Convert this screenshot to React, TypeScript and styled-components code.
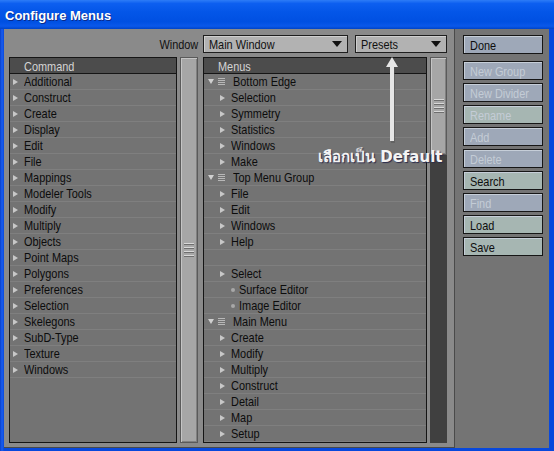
import React from "react";
import styled, { createGlobalStyle, css } from "styled-components";

const GlobalStyle = createGlobalStyle`
  html, body {
    margin: 0;
    padding: 0;
    background: #0846d8;
  }
  * {
    box-sizing: border-box;
  }
`;

// the dialog font is a tall, narrow sans: squeeze Liberation Sans to get it
const narrow = (origin = "left") => css`
  display: inline-block;
  font-family: "Liberation Sans", Arial, sans-serif;
  font-size: 13px;
  transform: scaleX(0.84);
  transform-origin: ${origin} center;
  white-space: nowrap;
`;

type Item = {
  label: string;
  kind: "group" | "sub" | "leaf" | "blank";
};

const commands = [
  "Additional",
  "Construct",
  "Create",
  "Display",
  "Edit",
  "File",
  "Mappings",
  "Modeler Tools",
  "Modify",
  "Multiply",
  "Objects",
  "Point Maps",
  "Polygons",
  "Preferences",
  "Selection",
  "Skelegons",
  "SubD-Type",
  "Texture",
  "Windows",
];

const menus: Item[] = [
  { label: "Bottom Edge", kind: "group" },
  { label: "Selection", kind: "sub" },
  { label: "Symmetry", kind: "sub" },
  { label: "Statistics", kind: "sub" },
  { label: "Windows", kind: "sub" },
  { label: "Make", kind: "sub" },
  { label: "Top Menu Group", kind: "group" },
  { label: "File", kind: "sub" },
  { label: "Edit", kind: "sub" },
  { label: "Windows", kind: "sub" },
  { label: "Help", kind: "sub" },
  { label: "", kind: "blank" },
  { label: "Select", kind: "sub" },
  { label: "Surface Editor", kind: "leaf" },
  { label: "Image Editor", kind: "leaf" },
  { label: "Main Menu", kind: "group" },
  { label: "Create", kind: "sub" },
  { label: "Modify", kind: "sub" },
  { label: "Multiply", kind: "sub" },
  { label: "Construct", kind: "sub" },
  { label: "Detail", kind: "sub" },
  { label: "Map", kind: "sub" },
  { label: "Setup", kind: "sub" },
];

const buttons: { label: string; tone: "blue" | "green"; disabled?: boolean }[] = [
  { label: "New Group", tone: "blue", disabled: true },
  { label: "New Divider", tone: "blue", disabled: true },
  { label: "Rename", tone: "green", disabled: true },
  { label: "Add", tone: "blue", disabled: true },
  { label: "Delete", tone: "blue", disabled: true },
  { label: "Search", tone: "green" },
  { label: "Find", tone: "blue", disabled: true },
  { label: "Load", tone: "green" },
  { label: "Save", tone: "green" },
];

export default function App() {
  return (
    <>
      <GlobalStyle />
      <Window>
        <TitleBar>Configure Menus</TitleBar>
        <Body>
          <MainArea>
            <TopBar>
              <FieldLabel>Window</FieldLabel>
              <Dropdown $width={145}>
                <DropText>Main Window</DropText>
                <DropArrow />
              </Dropdown>
              <Dropdown $width={92}>
                <DropText>Presets</DropText>
                <DropArrow />
              </Dropdown>
            </TopBar>

            <Lists>
              <ListBox $width={168}>
                <ListHeader>
                  <HeaderText>Command</HeaderText>
                </ListHeader>
                {commands.map((c) => (
                  <Row key={c}>
                    <RightTri />
                    <RowText $gap={6}>{c}</RowText>
                  </Row>
                ))}
              </ListBox>

              <ScrollFull>
                <Grip />
              </ScrollFull>

              <ListBox $width={224}>
                <ListHeader>
                  <HeaderText>Menus</HeaderText>
                </ListHeader>
                {menus.map((m, i) => (
                  <MenuRow key={i} item={m} />
                ))}
              </ListBox>

              <ScrollTrack>
                <ScrollThumb>
                  <Grip />
                </ScrollThumb>
              </ScrollTrack>

              <Annotation>
                <ArrowSvg width="14" height="86" viewBox="0 0 14 86">
                  <path d="M8 2 L14 12 L10 12 L10 86 L6 86 L6 12 L2 12 Z" fill="#555" opacity="0.55" />
                  <path d="M7 0 L13 10 L9 10 L9 84 L5 84 L5 10 L1 10 Z" fill="#e6e6e6" />
                </ArrowSvg>
                <Note>เลือกเป็น Default</Note>
              </Annotation>
            </Lists>
          </MainArea>

          <SidePanel>
            <SideButton $tone="blue" $gapAfter={4}>
              <ButtonText>Done</ButtonText>
            </SideButton>
            {buttons.map((b) => (
              <SideButton key={b.label} $tone={b.tone} $disabled={b.disabled}>
                <ButtonText>{b.label}</ButtonText>
              </SideButton>
            ))}
          </SidePanel>
        </Body>
      </Window>
    </>
  );
}

function MenuRow({ item }: { item: Item }) {
  if (item.kind === "blank") return <Row />;
  if (item.kind === "group") {
    return (
      <Row>
        <DownTri />
        <ListIcon>
          <span />
          <span />
          <span />
          <span />
        </ListIcon>
        <RowText $gap={8}>{item.label}</RowText>
      </Row>
    );
  }
  if (item.kind === "leaf") {
    return (
      <Row $indent={24}>
        <Dot />
        <RowText $gap={4}>{item.label}</RowText>
      </Row>
    );
  }
  return (
    <Row $indent={13}>
      <RightTri />
      <RowText $gap={6}>{item.label}</RowText>
    </Row>
  );
}

const Window = styled.div`
  width: 554px;
  height: 451px;
  display: flex;
  flex-direction: column;
  background: linear-gradient(90deg, #0a3fc8 0px, #1a5ef0 2px, #0848dc 4px);
  overflow: hidden;
`;

const TitleBar = styled.div`
  height: 29px;
  flex: none;
  padding: 8px 0 0 5px;
  font-family: "Liberation Sans", Arial, sans-serif;
  font-weight: bold;
  font-size: 13px;
  line-height: 16px;
  color: #ffffff;
  text-shadow: 1px 1px 0 #0a2a8a;
  background: linear-gradient(
    180deg,
    #2d7cf7 0%,
    #0d5ff0 12%,
    #0456e8 40%,
    #0050e2 75%,
    #0a58ea 90%,
    #0044c8 100%
  );
`;

const Body = styled.div`
  flex: 1;
  display: flex;
  margin: 0 5px 3px 4px;
  min-height: 0;
`;

const MainArea = styled.div`
  width: 451px;
  display: flex;
  flex-direction: column;
  background: #8a8a8a;
  border-right: 1px solid #4a4a4a;
  border-bottom: 1px solid #4a4a4a;
  padding: 6px 7px 4px 5px;
`;

const TopBar = styled.div`
  height: 18px;
  display: flex;
  justify-content: flex-end;
  align-items: center;
  gap: 7px;
  margin-bottom: 4px;
`;

const FieldLabel = styled.span`
  ${narrow("right")}
  color: #111;
  margin-right: -2px;
`;

const Dropdown = styled.div<{ $width: number }>`
  position: relative;
  width: ${(p) => p.$width}px;
  height: 18px;
  background: #b2b2b2;
  border: 1px solid #1e1e1e;
  box-shadow: inset 1px 1px 0 #cfcfcf;
  line-height: 16px;
  padding-left: 5px;
`;

const DropText = styled.span`
  ${narrow()}
  color: #111;
`;

const DropArrow = styled.span`
  position: absolute;
  right: 5px;
  top: 5px;
  width: 0;
  height: 0;
  border-left: 5px solid transparent;
  border-right: 5px solid transparent;
  border-top: 6px solid #111;
`;

const Lists = styled.div`
  position: relative;
  flex: 1;
  display: flex;
  min-height: 0;
`;

const ListBox = styled.div<{ $width: number }>`
  width: ${(p) => p.$width}px;
  background: #737373;
  border: 1px solid #151515;
  overflow: hidden;
`;

const ListHeader = styled.div`
  height: 16px;
  background: #4c4c4c;
  border-bottom: 1px solid #151515;
  line-height: 15px;
  padding-left: 14px;
`;

const HeaderText = styled.span`
  ${narrow()}
  color: #d4d4d4;
`;

const Row = styled.div<{ $indent?: number }>`
  height: 16px;
  display: flex;
  align-items: center;
  border-bottom: 1px solid #7f7f7f;
  padding-left: ${(p) => 3 + (p.$indent ?? 0)}px;
`;

const RowText = styled.span<{ $gap: number }>`
  ${narrow()}
  margin-left: ${(p) => p.$gap}px;
  line-height: 15px;
  color: #0c0c0c;
`;

const RightTri = styled.span`
  width: 0;
  height: 0;
  border-top: 3px solid transparent;
  border-bottom: 3px solid transparent;
  border-left: 5px solid #c8c8c8;
`;

const DownTri = styled.span`
  width: 0;
  height: 0;
  margin-left: 1px;
  border-left: 3px solid transparent;
  border-right: 3px solid transparent;
  border-top: 5px solid #d0d0d0;
`;

const ListIcon = styled.span`
  display: flex;
  flex-direction: column;
  gap: 1px;
  margin-left: 4px;
  span {
    width: 7px;
    height: 1px;
    background: #b8b8b8;
  }
`;

const Dot = styled.span`
  width: 4px;
  height: 4px;
  border-radius: 50%;
  background: #a8a8a8;
`;

const ScrollFull = styled.div`
  width: 18px;
  margin: 0 5px 0 3px;
  background: #a6a6a6;
  border: 1px solid #5a5a5a;
  box-shadow: inset 1px 1px 0 #c4c4c4, inset -1px -1px 0 #808080;
  display: flex;
  align-items: center;
  justify-content: center;
`;

const ScrollTrack = styled.div`
  width: 17px;
  margin-left: 3px;
  background: #404040;
  display: flex;
  flex-direction: column;
`;

const ScrollThumb = styled.div`
  height: 98px;
  background: #a6a6a6;
  border: 1px solid #5a5a5a;
  box-shadow: inset 1px 1px 0 #c4c4c4, inset -1px -1px 0 #808080;
  display: flex;
  align-items: center;
  justify-content: center;
`;

const Grip = styled.div`
  width: 10px;
  height: 14px;
  background: repeating-linear-gradient(
    180deg,
    #d8d8d8 0px,
    #d8d8d8 1px,
    #6e6e6e 1px,
    #6e6e6e 2px,
    transparent 2px,
    transparent 4px
  );
`;

const Annotation = styled.div`
  position: absolute;
  left: 311px;
  top: 0;
  width: 140px;
  pointer-events: none;
`;

const ArrowSvg = styled.svg`
  display: block;
  margin-left: 65px;
`;

const Note = styled.div`
  margin-top: 5px;
  margin-left: -2px;
  font-family: "DejaVu Sans", "Noto Sans", sans-serif;
  font-weight: bold;
  font-size: 15px;
  line-height: 18px;
  color: #f4f4f4;
  white-space: nowrap;
  text-shadow: 1px 1px 1px #2a2a4a;
`;

const SidePanel = styled.div`
  flex: 1;
  display: flex;
  flex-direction: column;
  gap: 3px;
  background: #747474;
  padding: 6px 0 0 8px;
`;

const toneBg = {
  blue: "#9ea8b8",
  green: "#a6b6b2",
};

const SideButton = styled.div<{
  $tone: "blue" | "green";
  $disabled?: boolean;
  $gapAfter?: number;
}>`
  width: 80px;
  height: 19px;
  flex: none;
  background: ${(p) => toneBg[p.$tone]};
  border: 1px solid #161616;
  box-shadow: inset 1px 1px 0 #c6ced8;
  line-height: 17px;
  padding-left: 6px;
  color: ${(p) => (p.$disabled ? "#c4ccd6" : "#0e0e0e")};
  margin-bottom: ${(p) => p.$gapAfter ?? 0}px;
`;

const ButtonText = styled.span`
  ${narrow()}
`;
